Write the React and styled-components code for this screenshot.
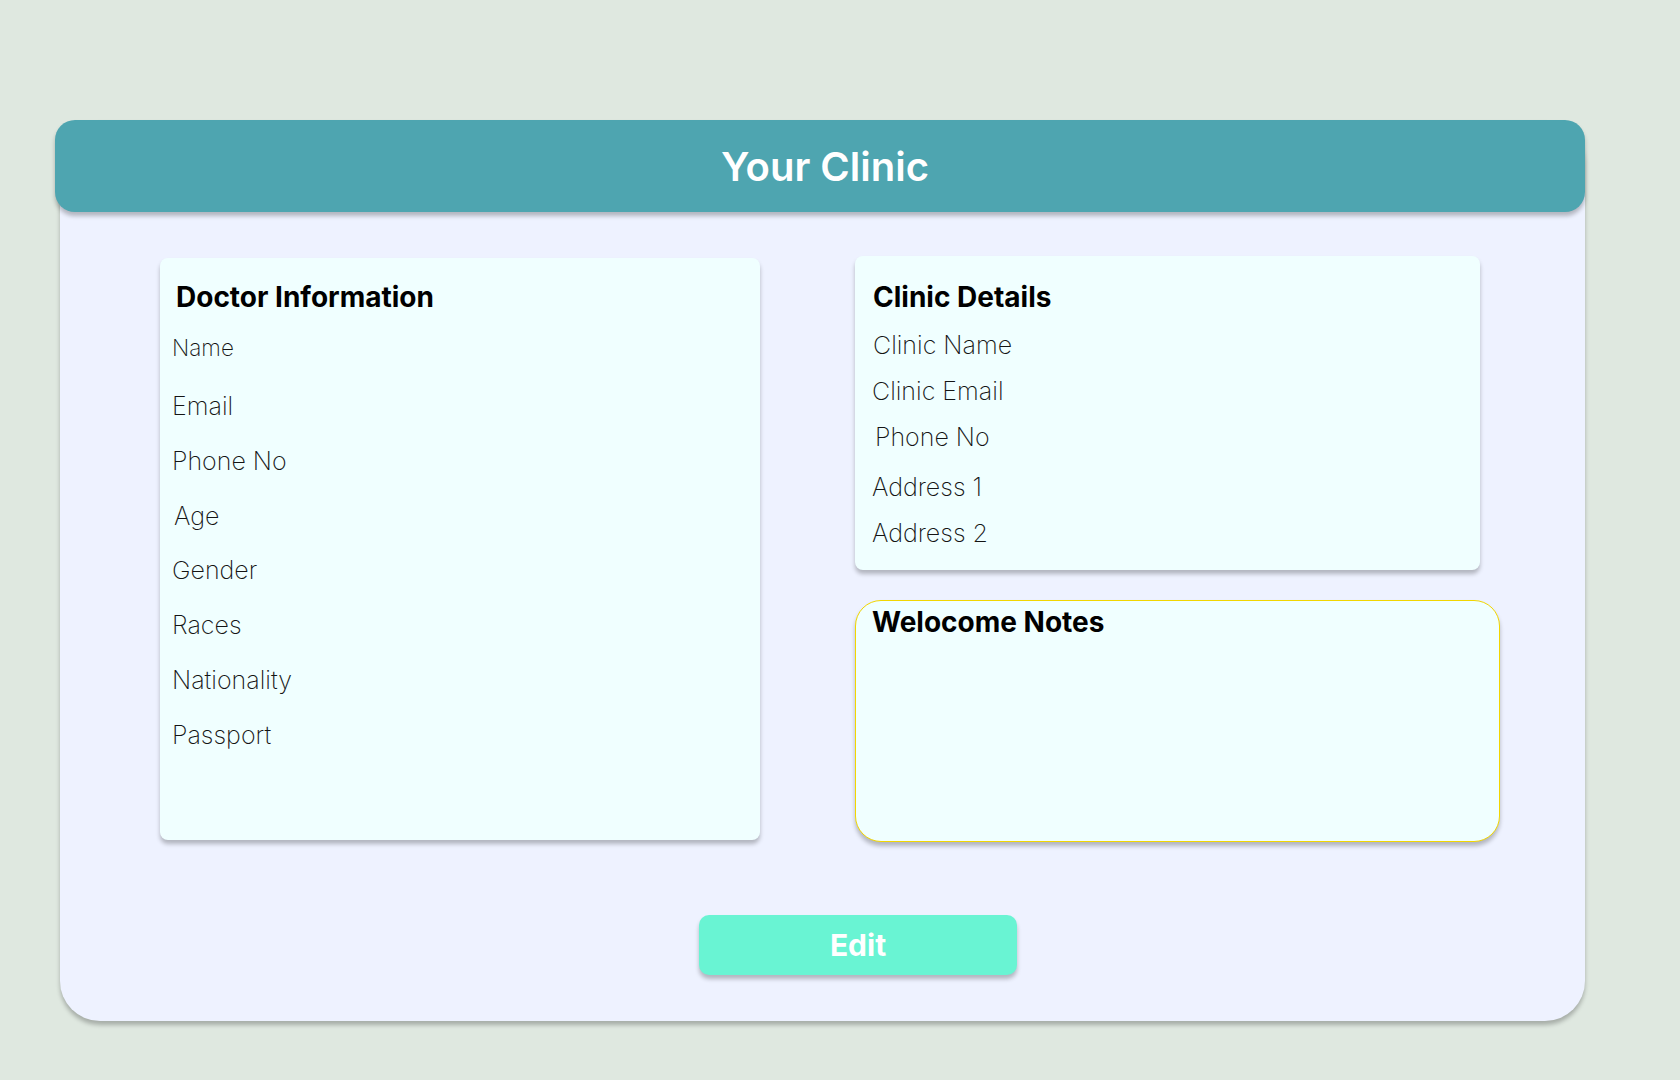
import React from "react";
import styled, { createGlobalStyle } from "styled-components";

const GlobalStyle = createGlobalStyle`
  body {
    margin: 0;
    background-color: #dfe8e0;
    font-family: Inter, "Noto Sans", sans-serif;
  }
`;

const Page = styled.div`
  min-height: 1080px;
  padding: 120px 0 0 60px;
  box-sizing: border-box;
`;

const Panel = styled.div`
  width: 1525px;
  background-color: #eef2ff;
  border-radius: 40px;
  box-shadow: 0 4px 4px rgba(0, 0, 0, 0.25);
  padding-bottom: 46px;
`;

const Header = styled.header`
  margin-left: -5px;
  height: 92px;
  padding-left: 10px;
  display: flex;
  align-items: center;
  justify-content: center;
  background-color: #4ea5b0;
  border-radius: 20px;
  box-shadow: 0 4px 4px rgba(0, 0, 0, 0.25);
`;

const Title = styled.h1`
  margin: 0;
  color: #fff;
  font-size: 40px;
  font-weight: 600;
`;

const Content = styled.div`
  display: grid;
  grid-template-columns: 600px 645px;
  column-gap: 95px;
  align-items: start;
  padding: 44px 0 0 100px;
`;

const Column = styled.div`
  display: flex;
  flex-direction: column;
  gap: 30px;
`;

const Card = styled.section`
  width: ${(p) => p.width || "100%"};
  height: ${(p) => p.height || "auto"};
  margin-top: ${(p) => p.offset || 0}px;
  box-sizing: border-box;
  background-color: #f0ffff;
  border-radius: 8px;
  box-shadow: 0 4px 4px rgba(0, 0, 0, 0.25);
  padding: ${(p) => p.pad || "23px 12px 22px"};
  display: flex;
  flex-direction: column;
  gap: ${(p) => p.gap || 24.7}px;
`;

const NotesCard = styled(Card)`
  border: 1px solid #f2d600;
  border-radius: 26px;
`;

const Heading = styled.h2`
  margin: 0 0 ${(p) => p.after || 0}px ${(p) => p.indent ?? 4}px;
  font-size: 28px;
  line-height: 32px;
  font-weight: 700;
  color: #000;
`;

const Label = styled.div`
  margin-left: ${(p) => p.shift || 0}px;
  margin-bottom: ${(p) => p.after || 0}px;
  font-size: ${(p) => p.size || 25}px;
  line-height: 30px;
  font-weight: 250;
  color: #141414;
`;

const Actions = styled.div`
  padding: 73px 0 0 639px;
`;

const EditButton = styled.button`
  width: 318px;
  height: 60px;
  border: none;
  border-radius: 10px;
  background-color: #69f4d3;
  box-shadow: 0 4px 4px rgba(0, 0, 0, 0.25);
  color: #fff;
  font-family: Inter, sans-serif;
  font-size: 30px;
  font-weight: 700;
  cursor: pointer;
`;

export default function App() {
  return (
    <Page>
      <GlobalStyle />
      <Panel>
        <Header>
          <Title>Your Clinic</Title>
        </Header>
        <Content>
          <Card height="582px" offset={2}>
            <Heading after={-5}>Doctor Information</Heading>
            <Label size={22.5} after={4}>Name</Label>
            <Label>Email</Label>
            <Label>Phone No</Label>
            <Label shift={2}>Age</Label>
            <Label>Gender</Label>
            <Label>Races</Label>
            <Label>Nationality</Label>
            <Label>Passport</Label>
          </Card>
          <Column>
            <Card width="625px" gap={16} pad="25px 16px 22px">
              <Heading indent={2} after={1}>Clinic Details</Heading>
              <Label shift={2}>Clinic Name</Label>
              <Label shift={1}>Clinic Email</Label>
              <Label shift={4} after={4}>Phone No</Label>
              <Label shift={1}>Address 1</Label>
              <Label shift={1}>Address 2</Label>
            </Card>
            <NotesCard height="242px" pad="5px 16px">
              <Heading indent={0}>Welocome Notes</Heading>
            </NotesCard>
          </Column>
        </Content>
        <Actions>
          <EditButton>Edit</EditButton>
        </Actions>
      </Panel>
    </Page>
  );
}
